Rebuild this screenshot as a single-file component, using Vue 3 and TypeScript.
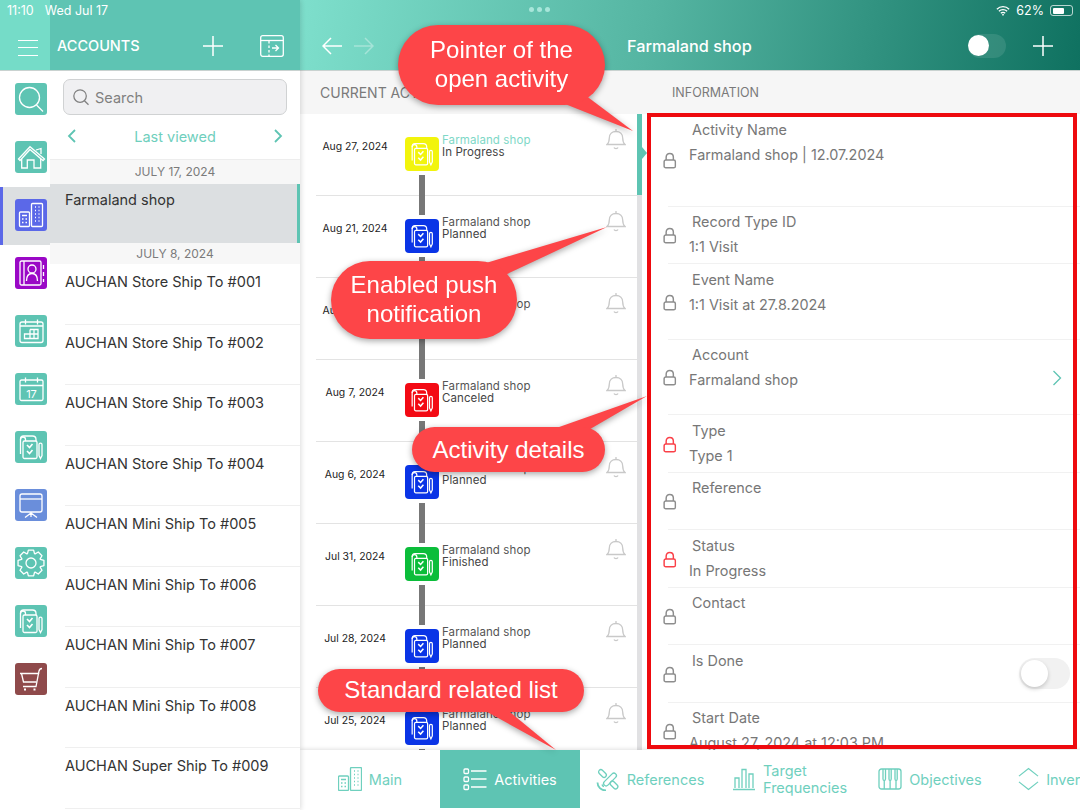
<script setup lang="ts">
interface RailItem {
  icon: string;
  tone: string;
  selected?: boolean;
}

interface Activity {
  date: string;
  status: string;
  tone: string;
  open?: boolean;
}

interface Field {
  label: string;
  value?: string;
  size?: 'tall' | 'wide';
  required?: boolean;
  link?: boolean;
  toggle?: boolean;
}

interface Tab {
  icon: string;
  label: string;
  active?: boolean;
}

const railItems: RailItem[] = [
  { icon: 'search', tone: 'teal' },
  { icon: 'home', tone: 'teal' },
  { icon: 'buildings', tone: 'indigo', selected: true },
  { icon: 'contacts', tone: 'purple' },
  { icon: 'calendar', tone: 'teal' },
  { icon: 'calendar-day', tone: 'teal' },
  { icon: 'activity', tone: 'teal' },
  { icon: 'board', tone: 'sky' },
  { icon: 'gear', tone: 'teal' },
  { icon: 'activity', tone: 'teal' },
  { icon: 'cart', tone: 'brown' },
];

const accounts = [
  'AUCHAN Store Ship To #001',
  'AUCHAN Store Ship To #002',
  'AUCHAN Store Ship To #003',
  'AUCHAN Store Ship To #004',
  'AUCHAN Mini Ship To #005',
  'AUCHAN Mini Ship To #006',
  'AUCHAN Mini Ship To #007',
  'AUCHAN Mini Ship To #008',
  'AUCHAN Super Ship To #009',
];

const activities: Activity[] = [
  { date: 'Aug 27, 2024', status: 'In Progress', tone: 'yellow', open: true },
  { date: 'Aug 21, 2024', status: 'Planned', tone: 'blue' },
  { date: 'Aug 14, 2024', status: 'Planned', tone: 'blue' },
  { date: 'Aug 7, 2024', status: 'Canceled', tone: 'red' },
  { date: 'Aug 6, 2024', status: 'Planned', tone: 'blue' },
  { date: 'Jul 31, 2024', status: 'Finished', tone: 'green' },
  { date: 'Jul 28, 2024', status: 'Planned', tone: 'blue' },
  { date: 'Jul 25, 2024', status: 'Planned', tone: 'blue' },
];

const fields: Field[] = [
  { label: 'Activity Name', value: 'Farmaland shop | 12.07.2024', size: 'tall' },
  { label: 'Record Type ID', value: '1:1 Visit' },
  { label: 'Event Name', value: '1:1 Visit at 27.8.2024', size: 'wide' },
  { label: 'Account', value: 'Farmaland shop', size: 'wide', link: true },
  { label: 'Type', value: 'Type 1', required: true },
  { label: 'Reference' },
  { label: 'Status', value: 'In Progress', required: true },
  { label: 'Contact' },
  { label: 'Is Done', toggle: true },
  { label: 'Start Date', value: 'August 27, 2024 at 12:03 PM' },
];

const tabs: Tab[] = [
  { icon: 'buildings-tab', label: 'Main' },
  { icon: 'list', label: 'Activities', active: true },
  { icon: 'satellite', label: 'References' },
  { icon: 'bars', label: 'Target Frequencies' },
  { icon: 'keys', label: 'Objectives' },
  { icon: 'updown', label: 'Inventories' },
];

// eight rounded teeth, easier to generate than to write by hand
const gearPath = (() => {
  const cx = 16;
  const cy = 16;
  const parts: string[] = [];
  for (let i = 0; i < 8; i++) {
    const a = (i * Math.PI) / 4;
    const pt = (r: number, d: number) =>
      `${(cx + r * Math.cos(a + d)).toFixed(2)} ${(cy + r * Math.sin(a + d)).toFixed(2)}`;
    parts.push(`${i === 0 ? 'M' : 'L'}${pt(10, -0.36)}`);
    parts.push(`L${pt(13.2, -0.2)}`);
    parts.push(`L${pt(13.2, 0.2)}`);
    parts.push(`L${pt(10, 0.36)}`);
  }
  return `${parts.join(' ')} Z`;
})();
</script>

<template>
  <div class="screen">
    <svg class="sprite" width="0" height="0">
      <defs>
        <symbol id="search" viewBox="0 0 32 32">
          <circle cx="14.5" cy="14.5" r="10" />
          <path d="M21.5 22l6.500 6.500" />
        </symbol>
        <symbol id="home" viewBox="0 0 32 32">
          <path d="M3.500 18L15 5.700 29.500 18l-1.500 1.500L15 8.500 5 19.500z" />
          <path d="M6.700 18v9h5.600v-8h6.700v8h6.700V18" />
          <path d="M21 9l5-1.500V13" />
        </symbol>
        <symbol id="buildings" viewBox="0 0 32 32">
          <rect x="4.500" y="13" width="10" height="14.500" rx="1" />
          <rect x="16.500" y="4.500" width="11" height="23" rx="1" />
          <path d="M7 16.500h5M7 20h1.500M10.500 20H12M7 23.500h1.500M10.500 23.500H12" />
          <path d="M20 8h1M23.500 8h1M20 11.500h1M23.500 11.500h1M20 15h1M23.500 15h1M20 18.500h1M23.500 18.500h1M20 22h1M23.500 22h1" />
        </symbol>
        <symbol id="buildings-tab" viewBox="4 4 24 24">
          <rect x="4.500" y="13" width="10" height="14.500" rx="1" />
          <rect x="16.500" y="4.500" width="11" height="23" rx="1" />
          <path d="M7 16.500h5M7 20h1.500M10.500 20H12M7 23.500h1.500M10.500 23.500H12" />
          <path d="M20 8h1M23.500 8h1M20 11.500h1M23.500 11.500h1M20 15h1M23.500 15h1M20 18.500h1M23.500 18.500h1M20 22h1M23.500 22h1" />
        </symbol>
        <symbol id="contacts" viewBox="0 0 32 32">
          <rect x="5" y="4" width="21" height="24" rx="1.500" />
          <path d="M9 4v24" />
          <circle cx="17" cy="12" r="4" />
          <path d="M11.500 24c0-5 2.500-7.500 5.500-7.500s5.500 2.500 5.500 7.500" />
          <path d="M28.500 8v4M28.500 15v4M28.500 22v3" />
        </symbol>
        <symbol id="calendar" viewBox="0 0 32 32">
          <rect x="5" y="7" width="23" height="20.500" rx="2" />
          <path d="M10.500 4.500v5M22.500 4.500v5M5 11h23" />
          <path d="M15 14.500h8v9H9.500v-4.500H23M15 14.500v9M19 14.500v9" />
        </symbol>
        <symbol id="calendar-day" viewBox="0 0 32 32">
          <rect x="5" y="7" width="23" height="20.500" rx="1.500" />
          <path d="M10.500 4.500v5M22.500 4.500v5M5 12.500h23" />
          <text x="16.500" y="24.500" text-anchor="middle" class="day-text">17</text>
        </symbol>
        <symbol id="activity" viewBox="0 0 32 32">
          <path d="M5.500 23V8.500c0-2 1.200-3.500 3-3.500h9c2 0 3.500 1.200 3.500 3.500V10" />
          <path d="M5.500 8.500c0-1.500 1.200-2.500 2.500-2.500s2.500 1 2.500 2.500V10" />
          <rect x="8" y="10" width="14" height="17.500" rx="1.500" />
          <path d="M12 14l2.500 2.500 3-3.500M12 20l2.500 2.500 3-3.500" stroke-width="1.600" />
          <path d="M24 13.500c0-.8.500-1.300 1.500-1.300s1.500.5 1.500 1.300v11l-1.500 3-1.500-3z" />
        </symbol>
        <symbol id="board" viewBox="0 0 32 32">
          <rect x="5" y="5" width="22" height="18" rx="2" />
          <path d="M5 10h22" />
          <path d="M16 23v5M16 24l-6 4.500M16 24l6 4.500" />
        </symbol>
        <symbol id="gear" viewBox="0 0 32 32">
          <path :d="gearPath" stroke-linejoin="round" />
          <circle cx="16" cy="16" r="5" />
        </symbol>
        <symbol id="cart" viewBox="0 0 32 32">
          <path d="M27 5.500c-1.800 0-2.600.8-3 2.500l-3 15.500H8" />
          <path d="M5 10.500h19.200M6.500 10.500l2 8.500h13" />
          <path d="M10 25.500v2M19.500 25.500v2" stroke-width="2" />
        </symbol>
        <symbol id="bell" viewBox="0 0 20 23">
          <path d="M1 16.500c1.800-1.600 2.300-3 2.300-6.500 0-4 2.700-6.500 6.700-6.500s6.700 2.500 6.700 6.500c0 3.500.5 4.900 2.300 6.500z" />
          <path d="M10 3.500V1M8 19.500c.5 1.400 3.500 1.400 4 0" />
        </symbol>
        <symbol id="lock" viewBox="0 0 12 15">
          <rect x="1" y="7" width="10" height="7" rx="1.500" />
          <path d="M2.800 7V4.500C2.800 2.500 4 1.200 6 1.200s3.200 1.300 3.200 3.300V7" />
        </symbol>
        <symbol id="list" viewBox="0 0 24 24">
          <rect x="1" y="2" width="4.500" height="4.500" rx="1" />
          <rect x="1" y="10" width="4.500" height="4.500" rx="1" />
          <rect x="1" y="18" width="4.500" height="4.500" rx="1" />
          <path d="M8 4h15.500M8 12h15.500M8 20h15.500" />
        </symbol>
        <symbol id="satellite" viewBox="0 0 24 24">
          <rect x="2" y="4.300" width="9" height="4.500" rx="2.200" transform="rotate(45 6.500 6.500)" />
          <rect x="13.500" y="15.800" width="9" height="4.500" rx="2.200" transform="rotate(45 18 18)" />
          <rect x="6" y="10" width="16" height="5" rx="2.500" transform="rotate(-45 14 12.500)" />
          <path d="M1.500 15.500c0 4.500 3.500 8 8.500 8" stroke-width="1.800" />
          <path d="M6 17.500c.3 1.200 1 1.800 2 2" />
        </symbol>
        <symbol id="bars" viewBox="0 0 24 24">
          <path d="M3 21V11h4v10M10 21V2.500h4V21M17 21V7h4v14M1 22.500h22" />
        </symbol>
        <symbol id="keys" viewBox="0 0 24 24">
          <rect x="1" y="2" width="22" height="20" rx="2.500" />
          <path d="M5 2v10c0 1 .6 1.500 1.250 1.500S7.500 13 7.500 12V2M11 2v10c0 1 .5 1.500 1.100 1.500s1.100-.5 1.100-1.500V2M17 2v10c0 1 .5 1.500 1.100 1.500s1.100-.5 1.100-1.500V2M6.250 13.500V22M12.100 13.500V22M18 13.500V22" />
        </symbol>
        <symbol id="updown" viewBox="1 0 22 24">
          <path d="M2 9l10-8 10 8M2 15l10 8 10-8" />
        </symbol>
      </defs>
    </svg>

    <aside class="sidebar">
      <header class="side-head">
        <div class="menu-cell">
          <span class="burger"></span>
        </div>
        <div class="side-bar">
          <span class="side-title">ACCOUNTS</span>
          <svg class="plus" viewBox="0 0 20 20"><path d="M10 0v20M0 10h20" /></svg>
          <svg class="split" viewBox="0 0 24 22">
            <rect x=".7" y=".7" width="22.600" height="20.600" rx="2" />
            <path d="M1 5.500h22" />
            <path d="M9 6v15" stroke-dasharray="2.500 2" />
            <path d="M12 13h6.500M15.500 10l3 3-3 3" />
          </svg>
        </div>
      </header>

      <div class="side-body">
        <nav class="rail">
          <div
            v-for="(item, i) in railItems"
            :key="i"
            :class="['rail-item', { selected: item.selected }]"
          >
            <span :class="['rail-icon', item.tone]">
              <svg><use :href="`#${item.icon}`" /></svg>
            </span>
          </div>
        </nav>

        <section class="accounts">
          <div class="search-wrap">
            <div class="search">
              <svg class="search-glass" viewBox="0 0 32 32"><use href="#search" /></svg>
              <span>Search</span>
            </div>
          </div>
          <div class="viewed">
            <svg class="chev" viewBox="0 0 10 14"><path d="M8 1L2 7l6 6" /></svg>
            <span>Last viewed</span>
            <svg class="chev" viewBox="0 0 10 14"><path d="M2 1l6 6-6 6" /></svg>
          </div>
          <div class="day">JULY 17, 2024</div>
          <div class="account current">Farmaland shop</div>
          <div class="day second">JULY 8, 2024</div>
          <div v-for="name in accounts" :key="name" class="account">{{ name }}</div>
        </section>
      </div>
    </aside>

    <main class="main">
      <header class="main-head">
        <span class="dots"><i></i><i></i><i></i></span>
        <svg class="arrow" viewBox="0 0 20 18"><path d="M20 9H1M9 1L1 9l8 8" /></svg>
        <svg class="arrow dim" viewBox="0 0 20 18"><path d="M0 9h19M11 1l8 8-8 8" /></svg>
        <span class="main-title">Farmaland shop</span>
        <span class="head-toggle"><i></i></span>
        <svg class="plus" viewBox="0 0 20 20"><path d="M10 0v20M0 10h20" /></svg>
      </header>

      <div class="panes">
        <section class="act-col">
          <h2 class="pane-title">CURRENT ACTIVITIES</h2>
          <div class="act-body">
            <div class="act-list">
              <div v-for="act in activities" :key="act.date" class="act-row">
                <span class="act-date">{{ act.date }}</span>
                <span :class="['act-icon', act.tone]">
                  <svg><use href="#activity" /></svg>
                </span>
                <span class="act-line"></span>
                <span class="act-text">
                  <span :class="['act-name', { open: act.open }]">Farmaland shop</span>
                  <span class="act-status">{{ act.status }}</span>
                </span>
                <svg class="bell"><use href="#bell" /></svg>
              </div>
            </div>
            <div class="track">
              <div class="thumb"></div>
            </div>
          </div>
        </section>

        <section class="info-col">
          <h2 class="pane-title info">INFORMATION</h2>
          <div class="info-list">
            <div v-for="field in fields" :key="field.label" :class="['field', field.size]">
              <svg :class="['lock', { required: field.required }]"><use href="#lock" /></svg>
              <div class="field-body">
                <div class="field-label">{{ field.label }}</div>
                <div v-if="field.value" class="field-value">{{ field.value }}</div>
              </div>
              <svg v-if="field.link" class="field-link" viewBox="0 0 10 16"><path d="M1.500 1l7 7-7 7" /></svg>
              <span v-if="field.toggle" class="field-toggle"><i></i></span>
            </div>
          </div>
        </section>
      </div>

      <nav class="tabs">
        <div v-for="tab in tabs" :key="tab.label" :class="['tab', { active: tab.active }]">
          <svg class="tab-icon"><use :href="`#${tab.icon}`" /></svg>
          <span class="tab-label">{{ tab.label }}</span>
        </div>
      </nav>
    </main>

    <div class="status">
      <span class="clock">11:10</span>
      <span>Wed Jul 17</span>
      <span class="status-right">
        <svg class="wifi" viewBox="0 0 16 12">
          <path d="M1 4.500a10 10 0 0 1 14 0M3.300 6.900a6.800 6.800 0 0 1 9.400 0M5.500 9.100a3.500 3.500 0 0 1 5 0" />
          <circle cx="8" cy="10.800" r="1" />
        </svg>
        <span>62%</span>
        <span class="battery"><i></i></span>
      </span>
    </div>

    <div class="red-frame"></div>

    <div class="callouts">
      <svg class="tails" viewBox="0 0 1080 810">
        <polygon points="555,100 585,95 633,131" />
        <polygon points="486,263 505,275 607,227" />
        <polygon points="545,432 585,432 647,396" />
        <polygon points="480,708 505,708 556,750" />
      </svg>
      <div class="callout c1">Pointer of the<br />open activity</div>
      <div class="callout c2">Enabled push<br />notification</div>
      <div class="callout c3">Activity details</div>
      <div class="callout c4">Standard related list</div>
    </div>
  </div>
</template>

<style>
html,
body {
  margin: 0;
  background: #fff;
}
</style>

<style scoped>
.screen {
  position: relative;
  display: flex;
  width: 1080px;
  height: 810px;
  overflow: hidden;
  font-family: Inter, "Noto Sans", sans-serif;
  color: #333;
}

.sprite {
  position: absolute;
}

svg {
  fill: none;
  stroke: currentColor;
  stroke-width: 1.3;
}

.day-text {
  font-family: Inter, sans-serif;
  font-size: 11px;
  fill: #fff;
  stroke: none;
}

/* sidebar */
.sidebar {
  position: relative;
  z-index: 2;
  display: flex;
  flex-direction: column;
  flex: none;
  width: 300px;
  height: 810px;
  overflow: hidden;
  background: #fff;
  box-shadow: 1px 0 5px rgba(0, 0, 0, 0.14);
}

.side-head {
  display: flex;
  flex: none;
  height: 70px;
  color: #fff;
  background: #5ec4b3;
  border-bottom: 1px solid #c9d2d0;
}

.menu-cell {
  display: flex;
  align-items: center;
  justify-content: center;
  flex: none;
  width: 50px;
  padding-top: 25px;
  padding-left: 6px;
  box-sizing: border-box;
  background: #75dcc8;
}

.burger {
  display: block;
  width: 20px;
  height: 14px;
  border-top: 1px solid #fff;
  border-bottom: 1px solid #fff;
  background: linear-gradient(#fff, #fff) center / 100% 1px no-repeat;
}

.side-bar {
  display: flex;
  align-items: center;
  flex: 1;
  padding: 21px 16px 0 7px;
}

.side-title {
  flex: 1;
  font-size: 14.500px;
  font-weight: 500;
}

.plus {
  width: 20px;
  height: 20px;
  stroke-width: 1.5;
}

.split {
  width: 24px;
  height: 22px;
  margin-left: 37px;
}

.side-body {
  display: flex;
  flex: 1;
  min-height: 0;
}

.rail {
  flex: none;
  width: 50px;
}

.rail-item {
  box-sizing: border-box;
  height: 58px;
  padding: 12px 0 0 15px;
}

.rail-item.selected {
  padding-left: 12px;
  background: #dcdfe1;
  border-left: 3px solid #5b68e8;
}

.rail-icon {
  display: block;
  width: 32px;
  height: 32px;
  color: #fff;
  border-radius: 3px;
}

.rail-icon svg {
  display: block;
  width: 32px;
  height: 32px;
}

.teal {
  background: #5ec4b3;
}

.indigo {
  background: #5b68e8;
}

.purple {
  background: #9a08c6;
}

.sky {
  background: #6a8edb;
}

.brown {
  background: #8f4a4b;
}

.yellow {
  background: #f2f40c;
}

.blue {
  background: #0a34e6;
}

.red {
  background: #f30a14;
}

.green {
  background: #0bbd3a;
}

.accounts {
  flex: 1;
  min-width: 0;
}

.search-wrap {
  padding: 8px 13px 0;
}

.search {
  display: flex;
  align-items: center;
  gap: 4px;
  box-sizing: border-box;
  height: 36px;
  padding-left: 7px;
  font-size: 14.500px;
  color: #808080;
  background: #f0f0f2;
  border: 1px solid #d0d2d3;
  border-radius: 7px;
}

.search-glass {
  width: 20px;
  height: 20px;
  stroke-width: 2;
}

.viewed {
  display: flex;
  align-items: center;
  justify-content: space-between;
  box-sizing: border-box;
  height: 44px;
  padding: 0 17px 2px;
  font-size: 14.500px;
  color: #6fcfbd;
}

.chev {
  width: 10px;
  height: 14px;
  color: #5ec4b3;
  stroke-width: 1.800;
}

.day {
  height: 24px;
  font-size: 12px;
  line-height: 23px;
  text-align: center;
  color: #7b7b7b;
  background: #f7f7f7;
  border-top: 1px solid #ededed;
}

.day.second {
  height: 21px;
  line-height: 22px;
  border-top: 0;
}

.account {
  box-sizing: border-box;
  height: 60.500px;
  padding: 8px 0 0 15px;
  font-size: 14.500px;
  line-height: 20px;
  color: #333;
  white-space: nowrap;
}

.account:not(.current)::after {
  content: "";
  display: block;
  height: 1px;
  margin-top: 31.500px;
  background: #efefef;
}

.account.current {
  height: 59px;
  padding-top: 6px;
  background: #dcdfe1;
  border-right: 3px solid #5ec4b3;
}

/* main */
.main {
  display: flex;
  flex-direction: column;
  flex: 1;
  min-width: 0;
}

.main-head {
  display: flex;
  align-items: center;
  flex: none;
  box-sizing: border-box;
  height: 71px;
  padding: 21px 27px 0 22px;
  color: #fff;
  background: linear-gradient(100deg, #7edfcc 0%, #55b5a2 45%, #0f7160 100%);
  border-bottom: 1px solid #c9d2d0;
}

.dots {
  position: absolute;
  top: 7px;
  left: 529px;
  display: flex;
  gap: 3px;
}

.dots i {
  width: 5px;
  height: 5px;
  border-radius: 50%;
  background: #a8e6da;
}

.arrow {
  width: 20px;
  height: 18px;
  margin-right: 12px;
  stroke-width: 1.500;
}

.arrow.dim {
  opacity: 0.35;
}

.main-title {
  flex: none;
  width: 126px;
  margin: 0 215px 0 241px;
  font-size: 16.300px;
  font-weight: 500;
  white-space: nowrap;
}

.head-toggle {
  display: block;
  flex: none;
  width: 38px;
  height: 24px;
  margin-right: 27px;
  background: rgba(255, 255, 255, 0.1);
  border-radius: 12px;
}

.head-toggle i {
  display: block;
  width: 21px;
  height: 21px;
  margin-top: 1px;
  background: #fff;
  border-radius: 50%;
}

.panes {
  display: flex;
  flex: 1;
  min-height: 0;
}

.pane-title {
  box-sizing: border-box;
  height: 43px;
  margin: 0;
  padding-left: 20px;
  font-size: 14px;
  font-weight: 400;
  line-height: 43px;
  color: #7a7a7a;
  background: #f6f6f6;
  white-space: nowrap;
}

.pane-title.info {
  padding-left: 25px;
  font-size: 12.500px;
}

.act-col {
  flex: none;
  width: 347px;
  overflow: hidden;
}

.act-body {
  display: flex;
  height: 636px;
  padding-left: 16px;
}

.act-list {
  flex: none;
  width: 321px;
}

.act-row {
  position: relative;
  display: flex;
  box-sizing: border-box;
  height: 82px;
  border-bottom: 1px solid #e3e3e3;
}

.act-date {
  flex: none;
  width: 78px;
  padding-top: 26px;
  font-size: 10.400px;
  line-height: 14px;
  text-align: center;
  color: #222;
}

.act-icon {
  flex: none;
  box-sizing: border-box;
  width: 34px;
  height: 34px;
  margin: 23px 3px 0 11px;
  padding: 2px;
  color: #fff;
  border-radius: 4px;
}

.act-icon svg {
  display: block;
  width: 30px;
  height: 30px;
}

.act-line {
  position: absolute;
  top: 61px;
  left: 103px;
  z-index: 1;
  width: 6px;
  height: 40px;
  background: #777;
}

.act-text {
  display: flex;
  flex-direction: column;
  flex: 1;
  padding-top: 20px;
  font-size: 11.500px;
  line-height: 12.300px;
  letter-spacing: 0.1px;
  color: #555;
}

.act-name.open {
  color: #7ed8c7;
}

.act-status {
  color: #444;
}

.bell {
  flex: none;
  width: 20px;
  height: 23px;
  margin: 14px 11px 0 0;
  color: #c9c9c9;
}

.track {
  position: relative;
  flex: none;
  width: 5px;
  background: #e1e1e3;
}

.thumb {
  height: 81px;
  background: #5ec4b3;
}

.thumb::after {
  content: "";
  position: absolute;
  top: 33px;
  left: 5px;
  border-top: 6px solid transparent;
  border-bottom: 6px solid transparent;
  border-left: 5px solid #5ec4b3;
}

.info-col {
  flex: 1;
  min-width: 0;
  overflow: hidden;
}

.info-list {
  height: 636px;
  overflow: hidden;
}

.field {
  display: flex;
  align-items: center;
  box-sizing: border-box;
  height: 57.500px;
  margin-left: 21px;
  border-bottom: 1px solid #f1f1f1;
}

.field.tall {
  height: 92.500px;
}

.field.wide {
  height: 75.500px;
}

.lock {
  flex: none;
  width: 13.500px;
  height: 17px;
  margin: 2px 12.500px 0 -5px;
  color: #8d8d8d;
}

.lock.required {
  color: #fa4048;
}

.field-body {
  flex: 1;
  align-self: flex-start;
  padding-top: 5.500px;
  font-size: 14.400px;
  line-height: 20px;
  color: #777;
}

.field-label {
  padding-left: 3px;
}

.field-value {
  margin-top: 5px;
  white-space: nowrap;
}

.field-link {
  flex: none;
  width: 10px;
  height: 16px;
  margin: 2px 18px 0 0;
  color: #5ec4b3;
}

.field-toggle {
  display: block;
  flex: none;
  width: 51px;
  height: 31px;
  margin-right: 10px;
  background: #f1f1f1;
  border-radius: 16px;
}

.field-toggle i {
  display: block;
  width: 27px;
  height: 27px;
  margin: 2px;
  background: #fff;
  border-radius: 50%;
  box-shadow: 0 2px 4px rgba(0, 0, 0, 0.18);
}

.tabs {
  position: relative;
  z-index: 1;
  display: flex;
  flex: none;
  height: 60px;
  background: #fff;
  box-shadow: 0 -1px 4px rgba(0, 0, 0, 0.12);
}

.tab {
  display: flex;
  align-items: center;
  justify-content: center;
  gap: 7px;
  flex: none;
  box-sizing: border-box;
  width: 140px;
  height: 58px;
  font-size: 14.500px;
  line-height: 17px;
  color: #6fd0be;
}

.tab.active {
  color: #fff;
  background: #5ec4b3;
}

.tab-icon {
  flex: none;
  width: 24px;
  height: 24px;
}

.tab:last-child .tab-icon {
  width: 21px;
}

.tab-label {
  max-width: 85px;
}

/* overlays */
.status {
  position: absolute;
  top: 0;
  right: 0;
  left: 0;
  z-index: 3;
  display: flex;
  align-items: center;
  height: 21px;
  padding-left: 7px;
  font-size: 12.500px;
  color: #fff;
}

.clock {
  margin-right: 11px;
}

.status-right {
  display: flex;
  align-items: center;
  gap: 6px;
  margin-left: auto;
  padding-right: 7px;
}

.wifi {
  width: 14px;
  height: 11px;
  stroke-width: 1.500;
}

.wifi circle {
  fill: #fff;
  stroke: none;
}

.battery {
  display: block;
  box-sizing: border-box;
  width: 23px;
  height: 11px;
  padding: 1.500px;
  border: 1px solid rgba(255, 255, 255, 0.7);
  border-radius: 3px;
}

.battery i {
  display: block;
  width: 62%;
  height: 100%;
  background: #fff;
  border-radius: 1px;
}

.red-frame {
  position: absolute;
  top: 113px;
  left: 647px;
  z-index: 3;
  box-sizing: border-box;
  width: 430px;
  height: 636px;
  border: 4px solid #ee0a0e;
}

.callouts {
  position: absolute;
  inset: 0;
  z-index: 4;
  filter: drop-shadow(0 2px 3px rgba(0, 0, 0, 0.35));
}

.tails {
  position: absolute;
  inset: 0;
  width: 1080px;
  height: 810px;
  fill: #fd4548;
  stroke: none;
}

.callout {
  position: absolute;
  display: flex;
  align-items: center;
  justify-content: center;
  box-sizing: border-box;
  padding-bottom: 2px;
  font-family: "Liberation Sans", Arial, sans-serif;
  font-size: 24px;
  line-height: 29px;
  text-align: center;
  color: #fff;
  background: #fd4548;
}

.c1 {
  top: 25px;
  left: 398px;
  width: 207px;
  height: 80px;
  border-radius: 40px;
}

.c2 {
  top: 261px;
  left: 331px;
  width: 186px;
  height: 78px;
  border-radius: 39px;
}

.c3 {
  top: 427px;
  left: 412px;
  width: 193px;
  height: 45px;
  padding-bottom: 0;
  border-radius: 23px;
}

.c4 {
  top: 669px;
  left: 318px;
  width: 266px;
  height: 43px;
  border-radius: 22px;
}
</style>
